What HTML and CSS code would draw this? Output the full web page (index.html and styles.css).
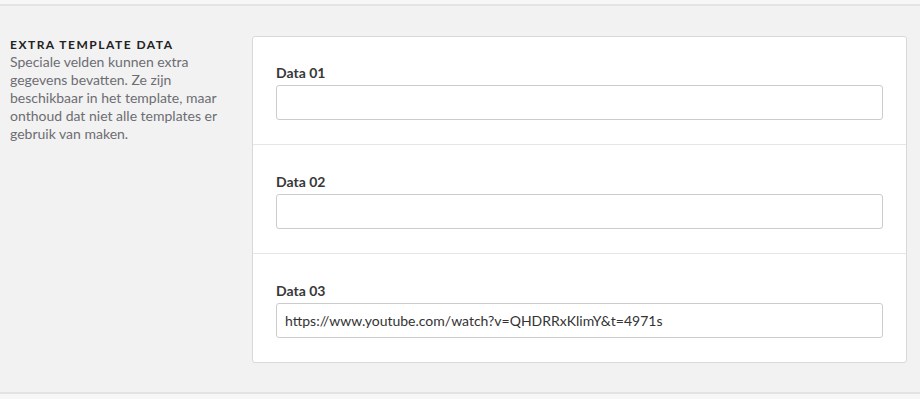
FILE: index.html
```html
<!DOCTYPE html>
<html>
<head>
  <title>Extra template data</title>
  <link rel="stylesheet" href="styles.css">
</head>
<body>

  <div class="topbar"></div>

  <div class="panel">
    <div class="intro">
      <h4>Extra template data</h4>
      <p>Speciale velden kunnen extra gegevens bevatten. Ze zijn beschikbaar in het template, maar onthoud dat niet alle templates er gebruik van maken.</p>
    </div>

    <div class="card">
      <div class="field">
        <label for="data1">Data 01</label>
        <input type="text" id="data1" />
      </div>
      <div class="field">
        <label for="data2">Data 02</label>
        <input type="text" id="data2" />
      </div>
      <div class="field">
        <label for="data3">Data 03</label>
        <input type="text" id="data3" value="https://www.youtube.com/watch?v=QHDRRxKlimY&amp;t=4971s" />
      </div>
    </div>
  </div>

  <div class="bottombar"></div>

</body>
</html>
```

FILE: styles.css
```css
body {
  margin: 0;
  font-family: Lato, "Open Sans", sans-serif;
  background: #f2f2f2;
}
.topbar {
  height: 4px;
  background: #f7f7f7;
  border-bottom: 2px solid #e3e3e3;
}
.panel {
  display: flex;
  padding: 30px 13px 29px 10px;
}
.intro {
  width: 222px;
  margin-right: 20px;
  flex-shrink: 0;
}
.intro h4 {
  margin: 2px 0 0;
  font-size: 12px;
  line-height: 14px;
  letter-spacing: 1.5px;
  text-transform: uppercase;
  color: #222;
}
.intro p {
  margin: 1px 0 0;
  font-size: 14px;
  line-height: 18px;
  color: #6d6d73;
}
.card {
  flex: 1;
  background: #fff;
  border: 1px solid #d9d9d9;
  border-radius: 3px;
}
.field {
  padding: 27px 23px 24px;
  border-top: 1px solid #e6e6e6;
}
.field:first-child {
  padding-top: 26px;
  border-top: none;
}
.field label {
  display: block;
  font-size: 14px;
  font-weight: bold;
  line-height: 20px;
  color: #383838;
  margin-bottom: 2px;
}
.field input {
  box-sizing: border-box;
  width: 100%;
  height: 35px;
  padding: 0 8px;
  font-family: Lato, "Open Sans", sans-serif;
  font-size: 14px;
  color: #333;
  border: 1px solid #ccc;
  border-radius: 3px;
  background: #fff;
}
.bottombar {
  border-top: 2px solid #e3e3e3;
  height: 10px;
  background: #f7f7f7;
}
```
